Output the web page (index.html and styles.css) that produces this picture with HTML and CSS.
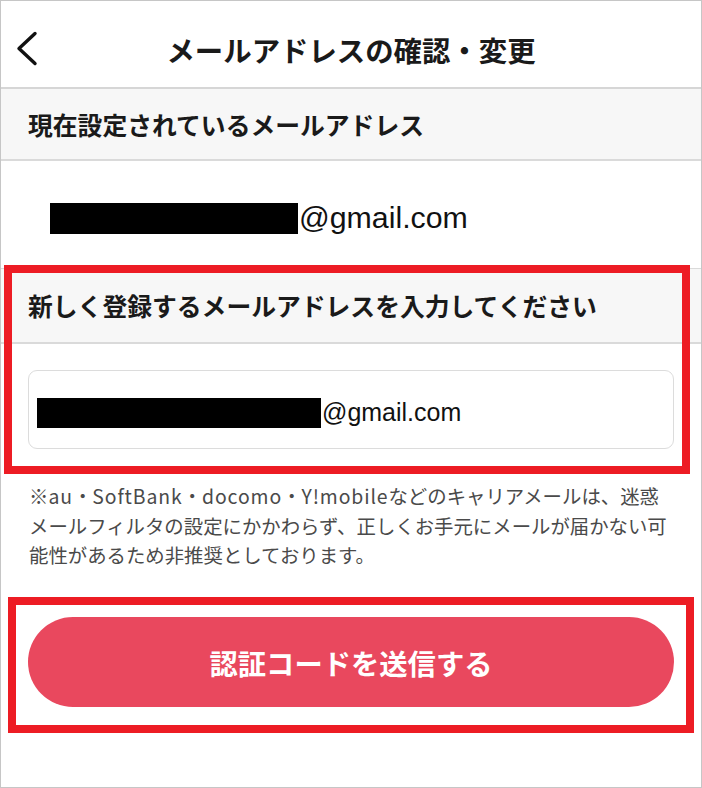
FILE: index.html
```
<!DOCTYPE html>
<html lang="ja">
<head>
<meta charset="utf-8">
<title>メールアドレスの確認・変更</title>
<link rel="stylesheet" href="styles.css">
</head>
<body>
<div class="screen">
  <header class="nav">
    <span class="back" aria-label="戻る">
      <svg width="24" height="36" viewBox="0 0 24 36"><polyline points="19,2.5 3,17.5 19,32.5" fill="none" stroke="#111" stroke-width="3.4" stroke-linecap="round" stroke-linejoin="round"/></svg>
    </span>
    <h1 class="title">メールアドレスの確認・変更</h1>
    <span></span>
  </header>

  <section>
    <h2 class="group-head head-current">現在設定されているメールアドレス</h2>
    <div class="current"><span class="redact redact-current"></span>@gmail.com</div>
  </section>

  <section>
    <h2 class="group-head head-new">新しく登録するメールアドレスを入力してください</h2>
    <div class="field-wrap">
      <div class="field"><span class="redact redact-field"></span>@gmail.com</div>
    </div>
  </section>

  <p class="note">※<span class="en">au</span>・<span class="en">SoftBank</span>・<span class="en">docomo</span>・<span class="en">Y!mobile</span>などのキャリアメールは、迷惑<br>メールフィルタの設定にかかわらず、正しくお手元にメールが届かない可<br>能性があるため非推奨としております。</p>

  <div class="action">
    <button class="submit">認証コードを送信する</button>
  </div>

  <div class="mark mark-input"></div>
  <div class="mark mark-button"></div>
</div>
</body>
</html>
```

FILE: styles.css
```
* { box-sizing: border-box; }

html, body {
  margin: 0;
  padding: 0;
  background: #fff;
}

.screen {
  position: relative;
  width: 702px;
  height: 788px;
  border: 1px solid #c6c6c6;
  overflow: hidden;
  font-family: "Noto Sans CJK JP", "Liberation Sans", sans-serif;
  color: #1a1a1a;
  background: #fff;
}

.nav {
  height: 88px;
  padding-top: 12px;
  display: grid;
  grid-template-columns: 1fr auto 1fr;
  align-items: center;
  border-bottom: 2px solid #d6d6d6;
}

.back {
  display: flex;
  padding-left: 15px;
  margin-top: -2px;
}

.title {
  margin: 0;
  font-size: 28.4px;
  line-height: 1;
  font-weight: 700;
}

.group-head {
  margin: 0;
  padding-left: 27px;
  display: flex;
  align-items: center;
  background: #f7f7f7;
  font-size: 24.8px;
  font-weight: 700;
  line-height: 1;
  border-bottom: 2px solid #dadada;
}

.head-current { height: 72px; }
.head-new { height: 75px; }

.current {
  height: 108px;
  padding-left: 49px;
  padding-top: 6px;
  display: flex;
  align-items: center;
  font-family: "Liberation Sans", Arial, sans-serif;
  font-size: 30.3px;
  color: #111;
  border-bottom: 1px solid #dadada;
}

.redact {
  display: inline-block;
  background: #000;
}

.redact-current {
  width: 248px;
  height: 31px;
  margin-right: 1px;
  margin-top: 2px;
}

.field-wrap {
  padding: 26px 27px 0 27px;
}

.field {
  height: 79px;
  border: 1px solid #dcdcdc;
  border-radius: 9px;
  padding-left: 8px;
  padding-top: 5px;
  display: flex;
  align-items: center;
  font-family: "Liberation Sans", Arial, sans-serif;
  font-size: 25px;
  color: #111;
}

.redact-field {
  width: 284px;
  height: 30px;
  margin-right: 1px;
  margin-top: 2px;
}

.note {
  margin: 32px 0 0 0;
  padding: 0 20px 0 28px;
  font-family: "Noto Sans CJK JP", "Liberation Sans", sans-serif;
  font-size: 19.4px;
  line-height: 29.5px;
  color: #4a4a4a;
  white-space: nowrap;
}

.note .en {
  letter-spacing: 0.9px;
}

.action {
  margin-top: 47px;
  padding: 0 27px;
}

.submit {
  display: block;
  width: 646px;
  height: 90px;
  border: 0;
  border-radius: 45px;
  background: #e9485e;
  color: #fff;
  font-family: "Noto Sans CJK JP", "Liberation Sans", sans-serif;
  font-size: 28.3px;
  font-weight: 700;
  line-height: 1;
  padding: 4px 0 0 0;
}

.mark {
  position: absolute;
  border: 8px solid #ed1c24;
  pointer-events: none;
}

.mark-input {
  left: 3px;
  top: 264px;
  width: 686px;
  height: 209px;
}

.mark-button {
  left: 7px;
  top: 596px;
  width: 686px;
  height: 136px;
}
```
